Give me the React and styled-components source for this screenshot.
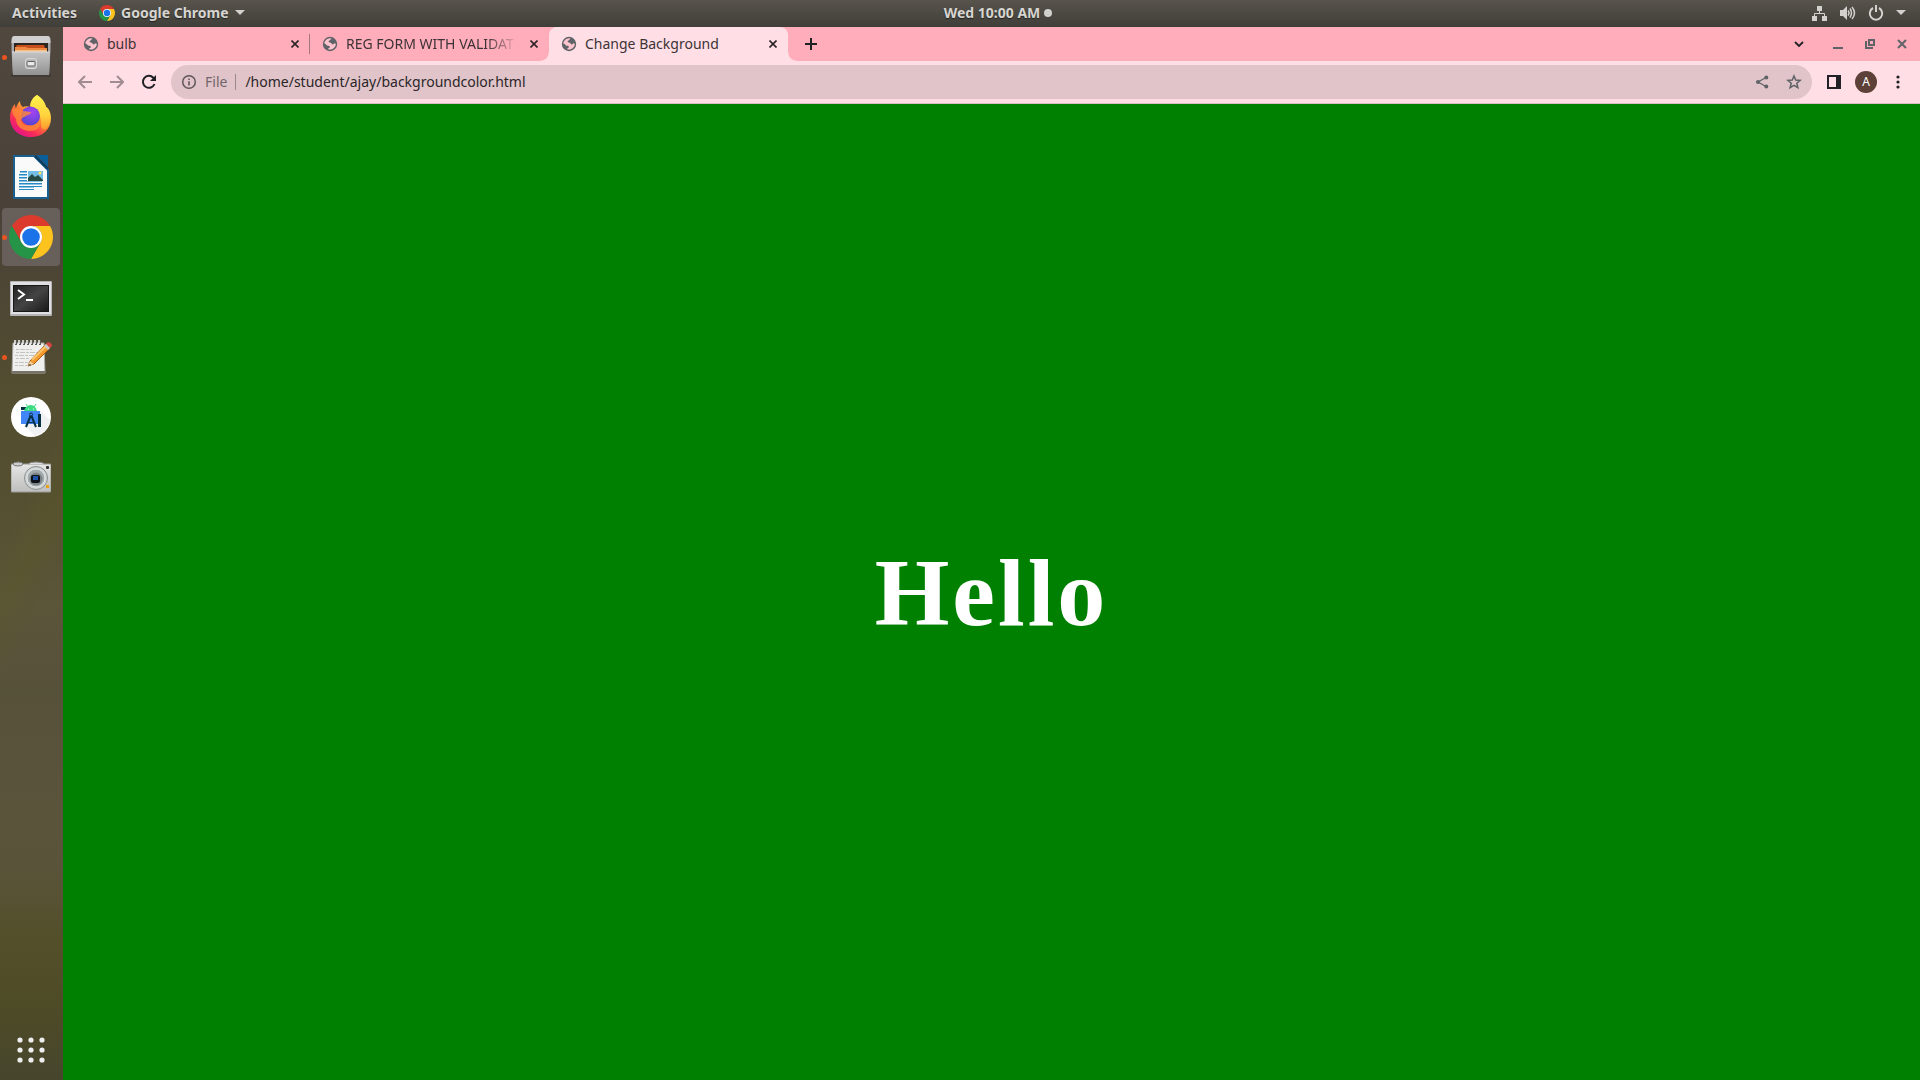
import React, { useState } from "react";
import styled, { createGlobalStyle, css } from "styled-components";

const GlobalStyle = createGlobalStyle`
  *, *::before, *::after { box-sizing: border-box; }
  body { margin: 0; font-family: "Noto Sans", "Open Sans", sans-serif; }
  button, input { font: inherit; color: inherit; }
`;

const Desktop = styled.div`
  display: flex;
  flex-direction: column;
  height: 100vh;
  overflow: hidden;
`;

/* ---------- system panel ---------- */

const TopBar = styled.header`
  display: flex;
  flex: none;
  height: 27px;
  padding-bottom: 2px;
  background: linear-gradient(#58544c, #403e39);
  color: #d6d5d1;
  font-size: 14px;
  font-weight: 700;
  text-shadow: 0 1px 1px rgba(0, 0, 0, 0.5);
`;

const TopLeft = styled.div`
  display: flex;
  flex: 1 1 76px;
  align-items: center;
  gap: 22px;
  padding-left: 12px;
`;

const TopRight = styled.div`
  display: flex;
  flex: 1 1 0;
  align-items: center;
  justify-content: flex-end;
`;

const TopButton = styled.button`
  display: flex;
  align-items: center;
  gap: ${(p) => p.$gap || 6}px;
  padding: 0;
  border: 0;
  background: none;
  line-height: 24px;
  white-space: nowrap;
  text-shadow: inherit;
`;

const StatusButton = styled(TopButton)`
  gap: 12px;
  padding-right: 14px;
`;

const Caret = styled.span`
  border: 5px solid transparent;
  border-top-color: #d2d1cd;
  border-bottom: 0;
`;

const Dot = styled.span`
  width: 8px;
  height: 8px;
  border-radius: 50%;
  background: #d2d1cd;
`;

/* ---------- dock ---------- */

const Body = styled.div`
  display: flex;
  flex: 1;
  min-height: 0;
`;

const Dock = styled.nav`
  display: flex;
  flex: none;
  flex-direction: column;
  gap: 2px;
  width: 63px;
  padding: 1px 3px 1px 2px;
  background:
    linear-gradient(118deg, transparent 44%, rgba(92, 88, 40, 0.4) 50%, transparent 56%),
    linear-gradient(
      #50473f 0%,
      #4a4238 17%,
      #4f4933 29%,
      #534e30 35%,
      #544f30 44%,
      #5b553a 55%,
      #565139 63%,
      #5a543b 74%,
      #595439 80%,
      #524f29 87%,
      #4d4a27 94%,
      #47462d 100%
    );
`;

const DockItem = styled.button`
  position: relative;
  display: flex;
  align-items: center;
  justify-content: center;
  height: 58px;
  padding: 0;
  border: 0;
  border-radius: 4px;
  background: ${(p) => (p.$active ? "#67605a" : "transparent")};
  ${(p) => p.$last && css`margin-top: auto;`}

  &::before {
    content: "";
    position: absolute;
    left: 0;
    width: 5px;
    height: 5px;
    border-radius: 50%;
    background: ${(p) => (p.$running ? "#e95420" : "transparent")};
  }
`;

/* ---------- browser ---------- */

const Browser = styled.main`
  display: flex;
  flex: 1;
  flex-direction: column;
  min-width: 0;
`;

const TabStrip = styled.div`
  display: flex;
  flex: none;
  align-items: center;
  height: 34px;
  padding: 0 4px 0 8px;
  background: #ffadbb;
  color: #2b2426;
`;

const Tab = styled.div`
  position: relative;
  display: flex;
  flex: 0 1 239px;
  align-items: center;
  gap: 8px;
  min-width: 0;
  height: 34px;
  padding: 0 7px 0 12px;
  color: #3c3336;

  ${(p) => p.$divider && css`
    background: linear-gradient(#a5767f, #a5767f) right center / 1px 20px no-repeat;
  `}

  ${(p) => p.$active && css`
    border-radius: 8px 8px 0 0;
    background: #ffdfe5;

    &::before,
    &::after {
      content: "";
      position: absolute;
      bottom: 0;
      width: 8px;
      height: 8px;
    }
    &::before {
      right: 100%;
      background: radial-gradient(circle at 0 0, transparent 7px, #ffdfe5 8px);
    }
    &::after {
      left: 100%;
      background: radial-gradient(circle at 100% 0, transparent 7px, #ffdfe5 8px);
    }
  `}
`;

const TabTitle = styled.button`
  flex: 1;
  min-width: 0;
  padding: 0;
  border: 0;
  overflow: hidden;
  background: none;
  font-size: 14px;
  line-height: 20px;
  text-align: left;
  white-space: nowrap;
  ${(p) => p.$fade && css`mask-image: linear-gradient(90deg, #000 calc(100% - 32px), transparent);`}
`;

const TabClose = styled.button`
  display: flex;
  align-items: center;
  justify-content: center;
  width: 16px;
  height: 16px;
  padding: 0;
  border: 0;
  background: none;
  color: #2b2426;
`;

const IconButton = styled.button`
  display: flex;
  flex: none;
  align-items: center;
  justify-content: center;
  width: 28px;
  height: 28px;
  padding: 0;
  border: 0;
  background: none;
  color: ${(p) => p.$color || "#202124"};
`;

const NewTab = styled(IconButton)`
  margin-left: 9px;
`;

const WindowControls = styled.div`
  display: flex;
  gap: 4px;
  margin-left: auto;
`;

const TabSearch = styled(IconButton)`
  margin-right: 7px;
`;

const Toolbar = styled.div`
  display: flex;
  flex: none;
  align-items: center;
  gap: 4px;
  height: 43px;
  padding: 0 8px;
  border-bottom: 1px solid #d9bfc4;
  background: #ffdfe5;
`;

const Omnibox = styled.form`
  display: flex;
  flex: 1;
  align-items: center;
  gap: 4px;
  height: 34px;
  margin: 0 4px;
  padding: 0 4px 0 10px;
  border-radius: 17px;
  background: #e0c4c9;
  font-size: 14px;
`;

const SchemeLabel = styled.label`
  display: flex;
  align-items: center;
  gap: 8px;
  color: #73666a;
  line-height: 20px;

  &::after {
    content: "";
    width: 1px;
    height: 16px;
    background: #98878b;
  }
`;

const AddressInput = styled.input`
  flex: 1;
  min-width: 0;
  padding: 0 5px;
  border: 0;
  outline: 0;
  background: none;
  color: #2b2628;
  line-height: 20px;
`;

const Avatar = styled.span`
  width: 22px;
  height: 22px;
  border-radius: 50%;
  background: #5d4037;
  color: #fff;
  font-size: 12px;
  line-height: 22px;
  text-align: center;
`;

const Page = styled.section`
  display: flex;
  flex: 1;
  align-items: center;
  justify-content: center;
  background: #008000;
`;

const Greeting = styled.h1`
  margin: 0;
  color: #fff;
  font-family: "Liberation Serif", "Times New Roman", serif;
  font-size: 96px;
  font-weight: 700;
  letter-spacing: 3px;
`;

/* ---------- drawings ---------- */

const ChromeLogo = ({ size }) => (
  <svg width={size} height={size} viewBox="0 0 48 48" aria-hidden="true">
    <path fill="#dc3a2c" d="M24 12H44.78A24 24 0 0 0 3.22 12L13.61 30A12 12 0 0 1 24 12Z" />
    <path fill="#fcc31e" d="M44.78 12A24 24 0 0 1 24 48L34.39 30A12 12 0 0 0 24 12Z" />
    <path fill="#269447" d="M3.22 12L13.61 30A12 12 0 0 0 34.39 30L24 48A24 24 0 0 1 3.22 12Z" />
    <circle cx="24" cy="24" r="12" fill="#fff" />
    <circle cx="24" cy="24" r="9.6" fill="#1a73e8" />
  </svg>
);

const FilesIcon = () => (
  <svg width="42" height="44" viewBox="0 0 42 44" aria-hidden="true">
    <defs>
      <linearGradient id="cab" x1="0" y1="0" x2="0" y2="1">
        <stop offset="0" stopColor="#c4c4c4" /><stop offset="1" stopColor="#929292" />
      </linearGradient>
    </defs>
    <rect x="1" y="39" width="40" height="3" rx="1" fill="#37332f" opacity=".6" />
    <path d="M4 1H38Q40 1 40.500 4V15L39 40H3L1.500 15V4Q2 1 4 1Z" fill="#a8a8a8" />
    <path d="M4 1H38Q40 1 40.500 8H1.500Q2 1 4 1Z" fill="#d0d0d0" />
    <rect x="4" y="8" width="34" height="10" fill="#2c2522" />
    <path d="M7 10H34L35 13H5Z" fill="#c4501b" />
    <path d="M5 12H16L18 13H37V18H5Z" fill="#ee8a42" />
    <path d="M5 15H37V17H5Z" fill="#f3c08c" />
    <path d="M2 17H40L39 40H3Z" fill="url(#cab)" />
    <path d="M2 17H40" stroke="#dcdcdc" />
    <rect x="15.500" y="23.500" width="11" height="10" rx="2" fill="#b8b8b8" stroke="#d8d8d8" />
    <rect x="17" y="26.500" width="8" height="4.500" rx="1" fill="#e9e9e9" stroke="#606060" />
  </svg>
);

const FirefoxIcon = () => (
  <svg width="42" height="44" viewBox="0 0 42 44" aria-hidden="true">
    <defs>
      <linearGradient id="fox" x1=".85" y1=".1" x2=".25" y2=".95">
        <stop offset="0" stopColor="#fff44f" /><stop offset=".32" stopColor="#ffbd35" />
        <stop offset=".55" stopColor="#ff7139" /><stop offset=".78" stopColor="#f82d56" />
        <stop offset="1" stopColor="#e31587" />
      </linearGradient>
      <radialGradient id="orb" cx=".6" cy=".3" r=".8">
        <stop offset="0" stopColor="#a743f2" /><stop offset="1" stopColor="#4747cf" />
      </radialGradient>
      <linearGradient id="tail" x1="0" y1="0" x2="0" y2="1">
        <stop offset="0" stopColor="#fff44f" /><stop offset=".6" stopColor="#ffd23c" />
        <stop offset="1" stopColor="#ff9a2f" />
      </linearGradient>
    </defs>
    <path fill="url(#fox)" d="M27 0C33 4 35 8 36 12C38 12 41 17 41 23C41 35 32 42 21 42C9 42 0 34 0 23C0 17 2 12 5 9C5 11 5.500 12 6 13C7 10 8 8 10 6C10 9 11 11 13 12C15 11 18 11 20 12C20 7 23 2 27 0Z" />
    <path fill="url(#tail)" d="M27 0C33 4 35 8 36 12C41 18 42 27 37 33C34 36 31 34 31 29C32 21 28 17 21 13C19 7 24 2 27 0Z" />
    <circle cx="20.500" cy="21" r="9.500" fill="url(#orb)" />
    <path fill="#ff8a36" d="M2 14C7 13 10 14 13 16L21 17C21 19 18 20 16 21C15 22 12 22 11 25C12 29 15 30.500 20 30.500C25 30.500 28 28 30 25C31 33 26 36 20 36C12 36 6 31 6 24C4 21 2 18 2 14Z" opacity=".8" />
  </svg>
);

const WriterIcon = () => (
  <svg width="38" height="46" viewBox="0 0 38 46" aria-hidden="true">
    <path d="M2 2H22L36 16V44H2Z" fill="#fafafa" stroke="#176090" strokeWidth="2" />
    <path d="M24 1H36V13Z" fill="#0b5f99" />
    <path d="M23 2L36 15" stroke="#083e65" strokeWidth="2" />
    <path d="M8 17.500H15M7 20.500H15M7 23.500H15M7 26.500H15M7 29.500H30M7 32.500H30M7 35.500H22" stroke="#2989c2" />
    <path d="M8 18.500H15M7 21.500H15M7 24.500H15M7 27.500H30M7 30.500H30M7 33.500H22" stroke="#8cc3e2" />
    <rect x="16" y="17" width="15" height="10" fill="#73bce6" />
    <circle cx="28" cy="19" r="1.500" fill="#ffe35a" />
    <path d="M16 24L20 20L23 23L26 21L31 26V27H16Z" fill="#274a42" />
  </svg>
);

const TerminalIcon = () => (
  <svg width="42" height="38" viewBox="0 -3 42 38" aria-hidden="true">
    <defs>
      <linearGradient id="term" x1="0" y1="0" x2="1" y2="1">
        <stop offset="0" stopColor="#222" /><stop offset=".5" stopColor="#444" /><stop offset="1" stopColor="#191919" />
      </linearGradient>
    </defs>
    <rect y="0" width="42" height="35" rx="1" fill="#b5b5b7" />
    <rect x="1" y="1" width="40" height="32" fill="#e0e0e3" />
    <rect x="3.500" y="4.500" width="35" height="26" fill="url(#term)" stroke="#171717" />
    <path d="M8 9L14 13.500L8 18" fill="none" stroke="#fff" strokeWidth="2" />
    <path d="M16 19H23" stroke="#fff" strokeWidth="2" />
  </svg>
);

const EditorIcon = () => (
  <svg width="42" height="36" viewBox="0 0 42 36" aria-hidden="true">
    <path d="M3 4H34L35 34H2Z" fill="#efefed" stroke="#aaa9a5" />
    <path d="M2 33H35" stroke="#77736b" strokeWidth="2" />
    <path d="M6 1V6M10 1V6M14 1V6M18 1V6M22 1V6M26 1V6M30 1V6" stroke="#5a5a58" strokeWidth="2" />
    <path d="M5 1V5M9 1V5M13 1V5M17 1V5M21 1V5M25 1V5M29 1V5" stroke="#f5f5f5" strokeWidth="1.500" />
    <path d="M6 10.500H22M6 13.500H28M5 16.500H25M6 19.500H19M5 23.500H20M5 26.500H17" stroke="#c4c4c1" strokeDasharray="3 1 5 1" />
    <path d="M20 22L36 5L40 9L24 25L18 27Z" fill="#f39a2d" stroke="#a95a17" />
    <path d="M22 21L37 6" stroke="#ffc46a" strokeWidth="2" />
    <path d="M20 22L24 25L18 27Z" fill="#f0d0a0" />
    <path d="M18 27L20 25L21 26Z" fill="#222" />
    <path d="M36 5L38 3Q42 4 42 7L40 9Z" fill="#d64540" />
    <path d="M34 7L36 5L40 9L38 11Z" fill="#c8c8ca" />
  </svg>
);

const StudioIcon = () => (
  <svg width="40" height="40" viewBox="0 0 40 40" aria-hidden="true">
    <circle cx="20" cy="20" r="20" fill="#fff" />
    <path d="M29 13L39 23A20 20 0 0 1 24 39L13 28Z" fill="#f0f1f3" />
    <path d="M10 10H17V13H10Z" fill="#073042" />
    <path d="M10 14H29V27H10Z" fill="#4285f4" />
    <path d="M13 14C14 10 17 8 20 8S25 10 26 14Z" fill="#3ddc84" />
    <path d="M15 7L17 10M25 7L23 10" stroke="#3ddc84" />
    <circle cx="17.500" cy="12" r=".6" fill="#fff" /><circle cx="22.500" cy="12" r=".6" fill="#fff" />
    <circle cx="20" cy="17.500" r="1.500" fill="#4285f4" stroke="#073042" />
    <path d="M19.500 19L15 30M20.500 19L25 30" fill="none" stroke="#073042" strokeWidth="2" />
    <path d="M17 25Q20 26.500 23 25" fill="none" stroke="#073042" />
    <path d="M27 17H30V30H27Z" fill="#073042" />
  </svg>
);

const CameraIcon = () => (
  <svg width="40" height="32" viewBox="0 0 40 32" aria-hidden="true">
    <defs>
      <linearGradient id="cam" x1="0" y1="0" x2="0" y2="1">
        <stop offset="0" stopColor="#e6e6e6" /><stop offset="1" stopColor="#bebebd" />
      </linearGradient>
    </defs>
    <rect x="0" y="3" width="40" height="28" rx="1" fill="url(#cam)" stroke="#9a9a98" />
    <ellipse cx="7" cy="3" rx="5" ry="2" fill="#ccc" stroke="#777" />
    <path d="M17 3Q19 1 25 1T34 3" fill="#ddd" stroke="#888" />
    <circle cx="25" cy="17" r="11.500" fill="#d2d5d6" stroke="#888e90" />
    <circle cx="25" cy="17" r="9" fill="#a4abad" stroke="#e3e5e5" />
    <circle cx="25" cy="18" r="6.500" fill="#7b8387" />
    <rect x="20" y="14" width="9" height="8" rx="2" fill="#0b1116" />
    <rect x="22" y="15" width="5" height="4" fill="#1d53a6" />
    <rect x="35" y="5" width="3" height="3" rx="1" fill="#30322f" />
    <rect x="35" y="24" width="3" height="3" fill="#e9a11b" />
  </svg>
);

const AppsIcon = () => (
  <svg width="28" height="26" viewBox="0 0 28 26" fill="#eee" aria-hidden="true">
    {[3, 13, 23].map((y) => [3, 14, 25].map((x) => <circle key={`${x}-${y}`} cx={x} cy={y} r="2.600" />))}
  </svg>
);

const GlobeIcon = () => (
  <svg width="16" height="16" viewBox="0 0 16 16" aria-hidden="true">
    <circle cx="8" cy="8" r="7.200" fill="#5f6368" />
    <path
      fill="#ffc4ce"
      d="M9.600 2.600C8.500 3 8.700 4.200 7.500 4.600C6 5 6.500 6.300 7.600 6.400C9 6.500 9.800 7.200 9.700 8C10.500 8.800 12 8.300 12.200 7.300L13.800 7.800C13.800 10.900 11.200 13.600 8 13.600C7.200 13.600 6.600 13.500 6.200 13.200C6 12 7.800 12.200 7.900 11C8 9.900 7 9.700 6 9.700C4.600 9.700 4.400 8.500 3.600 7.900L2.300 7.500C2.600 5 4.800 2.400 8 2.300Z"
    />
  </svg>
);

const Line = ({ size = 16, width = 2, d, fill = "none" }) => (
  <svg width={size} height={size} viewBox={`0 0 ${size} ${size}`} fill={fill} stroke="currentColor" strokeWidth={width} aria-hidden="true">
    <path d={d} />
  </svg>
);

const ReloadIcon = () => (
  <svg width="16" height="16" viewBox="0 0 16 16" aria-hidden="true">
    <path d="M13.500 10A6 6 0 1 1 12.300 3.700L14 5.500" fill="none" stroke="currentColor" strokeWidth="2" />
    <path d="M15 1V7H9Z" fill="currentColor" />
  </svg>
);

const InfoIcon = () => (
  <svg width="16" height="16" viewBox="0 0 16 16" aria-hidden="true">
    <circle cx="8" cy="8" r="6.300" fill="none" stroke="#5f5559" strokeWidth="1.500" />
    <path d="M7.200 7.200H8.800V11.500H7.200ZM7.200 4.500H8.800V6H7.200Z" fill="#5f5559" />
  </svg>
);

const ShareIcon = () => (
  <svg width="16" height="16" viewBox="0 0 16 16" fill="currentColor" aria-hidden="true">
    <path d="M12.500 3.300L4 8L12.500 12.700" fill="none" stroke="currentColor" strokeWidth="1.300" />
    <circle cx="12.300" cy="3.400" r="2" /><circle cx="4" cy="8" r="2" /><circle cx="12.300" cy="12.600" r="2" />
  </svg>
);

const PanelIcon = () => (
  <svg width="14" height="14" viewBox="0 0 14 14" aria-hidden="true">
    <path fill="currentColor" fillRule="evenodd" d="M0 0H14V14H0ZM2 2V12H9V2Z" />
  </svg>
);

const MoreIcon = () => (
  <svg width="4" height="14" viewBox="0 0 4 14" fill="currentColor" aria-hidden="true">
    <circle cx="2" cy="2" r="1.600" /><circle cx="2" cy="7" r="1.600" /><circle cx="2" cy="12" r="1.600" />
  </svg>
);

const RestoreIcon = () => (
  <svg width="10" height="10" viewBox="0 0 10 10" fill="none" stroke="currentColor" strokeWidth="2" aria-hidden="true">
    <path d="M4 1H9V6H4Z" /><path d="M1 2V9H8" />
  </svg>
);

const NetworkIcon = () => (
  <svg width="16" height="16" viewBox="0 0 16 16" aria-hidden="true">
    <path fill="#d2d1cd" d="M5 1H10V6H5ZM0 11H5V16H0ZM10 11H15V16H10Z" />
    <path d="M7.500 6V8.500M2.500 11V8.500H12.500V11" fill="none" stroke="#d2d1cd" />
  </svg>
);

const VolumeIcon = () => (
  <svg width="16" height="16" viewBox="0 0 16 16" aria-hidden="true">
    <path fill="#d2d1cd" d="M0 5H3L7 1V15L3 11H0Z" />
    <path d="M8 5.500Q10 8 8 10.500M10 3.500Q13 8 10 12.500M12 2Q17 8 12 14" fill="none" stroke="#d2d1cd" strokeWidth="1.500" />
  </svg>
);

const PowerIcon = () => (
  <svg width="16" height="16" viewBox="0 0 16 16" fill="none" stroke="#d2d1cd" strokeWidth="2" aria-hidden="true">
    <path d="M5 3A6.200 6.200 0 1 0 11 3M8 0V7" />
  </svg>
);

const dockApps = [
  { name: "Files", icon: FilesIcon, running: true },
  { name: "Firefox", icon: FirefoxIcon },
  { name: "LibreOffice Writer", icon: WriterIcon },
  { name: "Google Chrome", icon: () => <ChromeLogo size={44} />, running: true, active: true },
  { name: "Terminal", icon: TerminalIcon },
  { name: "Text Editor", icon: EditorIcon, running: true },
  { name: "Android Studio", icon: StudioIcon },
  { name: "Camera", icon: CameraIcon },
];

const tabs = [
  { title: "bulb", divider: true },
  { title: "REG FORM WITH VALIDAT", fade: true },
  { title: "Change Background", active: true },
];

export default function App() {
  const [address, setAddress] = useState("/home/student/ajay/backgroundcolor.html");

  return (
    <Desktop>
      <GlobalStyle />
      <TopBar>
        <TopLeft>
          <TopButton>Activities</TopButton>
          <TopButton>
            <ChromeLogo size={16} />
            Google Chrome
            <Caret />
          </TopButton>
        </TopLeft>
        <TopButton $gap={4}>
          Wed 10:00 AM
          <Dot />
        </TopButton>
        <TopRight>
          <StatusButton aria-label="System menu">
            <NetworkIcon />
            <VolumeIcon />
            <PowerIcon />
            <Caret />
          </StatusButton>
        </TopRight>
      </TopBar>

      <Body>
        <Dock aria-label="Dock">
          {dockApps.map(({ name, icon: Icon, running, active }) => (
            <DockItem key={name} aria-label={name} $running={running} $active={active}>
              <Icon />
            </DockItem>
          ))}
          <DockItem aria-label="Show Applications" $last>
            <AppsIcon />
          </DockItem>
        </Dock>

        <Browser>
          <TabStrip>
            {tabs.map((tab) => (
              <Tab key={tab.title} $active={tab.active} $divider={tab.divider}>
                <GlobeIcon />
                <TabTitle $fade={tab.fade}>{tab.title}</TabTitle>
                <TabClose aria-label={`Close ${tab.title}`}>
                  <Line size={8} width={1.6} d="M0.500 0.500L7.500 7.500M7.500 0.500L0.500 7.500" />
                </TabClose>
              </Tab>
            ))}
            <NewTab aria-label="New tab">
              <Line size={12} d="M6 0V12M0 6H12" />
            </NewTab>
            <WindowControls>
              <TabSearch aria-label="Search tabs">
                <Line size={10} width={1.8} d="M1 3L5 7L9 3" />
              </TabSearch>
              <IconButton aria-label="Minimize" $color="#5f6368">
                <Line size={10} d="M0 9H10" />
              </IconButton>
              <IconButton aria-label="Restore" $color="#5f6368">
                <RestoreIcon />
              </IconButton>
              <IconButton aria-label="Close window" $color="#5f6368">
                <Line size={10} d="M1 1L9 9M9 1L1 9" />
              </IconButton>
            </WindowControls>
          </TabStrip>

          <Toolbar>
            <IconButton aria-label="Back" $color="#a08c91">
              <Line size={14} d="M14 7H1M7 1L1 7L7 13" />
            </IconButton>
            <IconButton aria-label="Forward" $color="#a08c91">
              <Line size={14} d="M0 7H13M7 1L13 7L7 13" />
            </IconButton>
            <IconButton aria-label="Reload">
              <ReloadIcon />
            </IconButton>
            <Omnibox onSubmit={(e) => e.preventDefault()}>
              <SchemeLabel htmlFor="address">
                <InfoIcon />
                File
              </SchemeLabel>
              <AddressInput id="address" value={address} onChange={(e) => setAddress(e.target.value)} />
              <IconButton type="button" aria-label="Share" $color="#5f6368">
                <ShareIcon />
              </IconButton>
              <IconButton type="button" aria-label="Bookmark" $color="#5f6368">
                <Line width={1.5} d="M8 2L9.700 6.100L14.200 6.400L10.800 9.300L11.900 13.700L8 11.300L4.100 13.700L5.200 9.300L1.800 6.400L6.300 6.100Z" />
              </IconButton>
            </Omnibox>
            <IconButton aria-label="Side panel">
              <PanelIcon />
            </IconButton>
            <IconButton aria-label="Profile">
              <Avatar>A</Avatar>
            </IconButton>
            <IconButton aria-label="Browser menu">
              <MoreIcon />
            </IconButton>
          </Toolbar>

          <Page>
            <Greeting>Hello</Greeting>
          </Page>
        </Browser>
      </Body>
    </Desktop>
  );
}
